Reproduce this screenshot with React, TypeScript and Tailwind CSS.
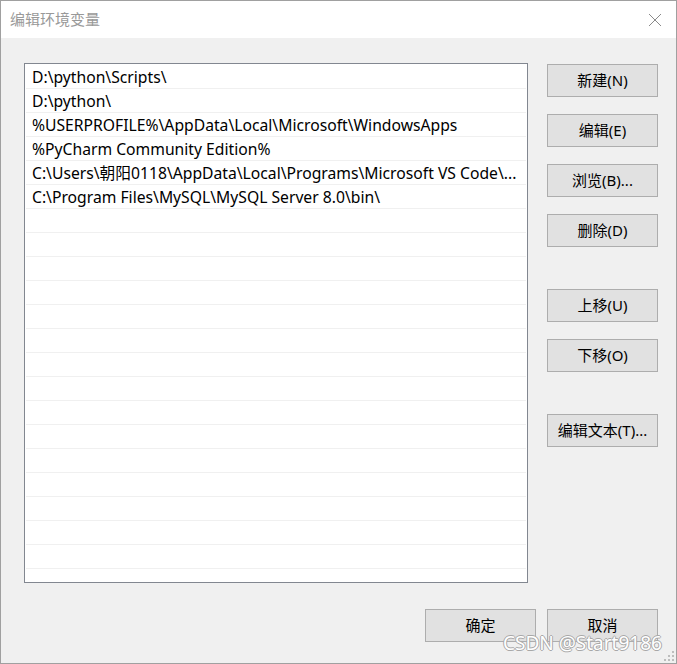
import React from "react";

const rows = [
  "D:\\python\\Scripts\\",
  "D:\\python\\",
  "%USERPROFILE%\\AppData\\Local\\Microsoft\\WindowsApps",
  "%PyCharm Community Edition%",
  "C:\\Users\\朝阳0118\\AppData\\Local\\Programs\\Microsoft VS Code\\...",
  "C:\\Program Files\\MySQL\\MySQL Server 8.0\\bin\\",
];

const font = { fontFamily: '"Noto Sans", "Noto Sans CJK SC", sans-serif' };

function Btn({ label, className = "" }: { label: string; className?: string }) {
  return (
    <div
      className={
        "w-[111px] h-[33px] flex items-center justify-center border border-[#adadad] bg-[#e1e1e1] text-[15px] text-black " +
        className
      }
    >
      {label}
    </div>
  );
}

export default function App() {
  const all = [...rows, ...Array(16).fill("")];
  return (
    <div
      className="relative w-[677px] h-[664px] bg-[#f0f0f0] border border-[#a0a0a0] flex flex-col overflow-hidden"
      style={font}
    >
      <div className="h-[37px] bg-white flex items-center justify-between pl-[9px] pr-[14px] shrink-0">
        <span className="text-[15px] text-[#999999]">编辑环境变量</span>
        <svg width="14" height="14" viewBox="0 0 14 14">
          <path d="M1 1 L13 13 M13 1 L1 13" stroke="#8a8a8a" strokeWidth="1" />
        </svg>
      </div>
      <div className="flex pl-[23px] pt-[25px]">
        <div className="w-[504px] h-[520px] border border-[#828790] bg-white p-[1px] overflow-hidden">
          {all.map((r, i) => (
            <div
              key={i}
              className="h-[24px] border-b border-[#f0f0f0] pl-[6px] pt-[2px] flex items-center text-[15.7px] text-black whitespace-nowrap leading-none"
            >
              {r}
            </div>
          ))}
        </div>
        <div className="ml-[19px] pt-[1px] flex flex-col">
          <Btn label="新建(N)" />
          <Btn label="编辑(E)" className="mt-[17px]" />
          <Btn label="浏览(B)..." className="mt-[17px]" />
          <Btn label="删除(D)" className="mt-[17px]" />
          <Btn label="上移(U)" className="mt-[42px]" />
          <Btn label="下移(O)" className="mt-[17px]" />
          <Btn label="编辑文本(T)..." className="mt-[42px]" />
        </div>
      </div>
      <div className="flex justify-end gap-[11px] pr-[18px] mt-[26px]">
        <Btn label="确定" />
        <Btn label="取消" />
      </div>
      <div
        className="absolute left-[502px] top-[633px] text-[19px] text-white leading-none whitespace-nowrap"
        style={{
          textShadow:
            "1px 0 0 #a8a8a8, -1px 0 0 #a8a8a8, 0 1px 0 #a8a8a8, 0 -1px 0 #a8a8a8",
        }}
      >
        CSDN @Start9186
      </div>
      <svg className="absolute right-[1px] bottom-[1px]" width="12" height="12" viewBox="0 0 12 12">
        {[
          [9, 1],
          [5, 5],
          [9, 5],
          [1, 9],
          [5, 9],
          [9, 9],
        ].map(([x, y], i) => (
          <rect key={i} x={x} y={y} width="2" height="2" fill="#bdbdbd" />
        ))}
      </svg>
    </div>
  );
}
